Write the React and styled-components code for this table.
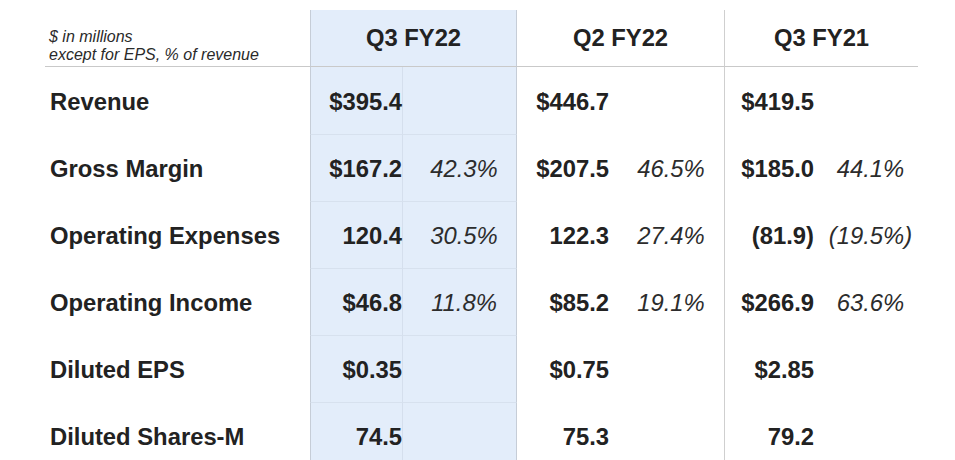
import React from 'react'
import styled, { createGlobalStyle } from 'styled-components'

const Global = createGlobalStyle`
  body {
    margin: 0;
    padding: 0;
    background: #ffffff;
    font-family: "Liberation Sans", Arial, sans-serif;
    color: #222222;
  }
`

const Page = styled.div`
  width: 955px;
  height: 460px;
  overflow: hidden;
  padding: 10px 0 0 45px;
  box-sizing: border-box;
`

const Table = styled.div`
  display: grid;
  grid-template-columns: 265px 93px 114px 92px 115px 90px 104px;
  grid-template-rows: 57px repeat(6, 67px);
  width: 873px;
`

const Note = styled.div`
  grid-column: 1;
  align-self: stretch;
  display: flex;
  flex-direction: column;
  justify-content: flex-end;
  padding: 0 0 2px 4px;
  border-bottom: 1px solid #c9c9c9;
  font-size: 16px;
  line-height: 18px;
  font-style: italic;
  color: #2a2a2a;
`

const Period = styled.div`
  grid-column: span 2;
  display: flex;
  align-items: center;
  justify-content: center;
  font-size: 23.8px;
  font-weight: 700;
  border-bottom: 1px solid #c9c9c9;
  box-sizing: border-box;
  background: ${({ hl }) => (hl ? '#e3edfa' : 'transparent')};
  border-left: ${({ hl, divider }) =>
    hl ? '1px solid #c6cdd7' : divider ? '1px solid #cfcfcf' : 'none'};
  border-right: ${({ hl }) => (hl ? '1px solid #c6cdd7' : 'none')};
`

const Label = styled.div`
  display: flex;
  align-items: center;
  padding: 2px 0 0 5px;
  font-size: 23.8px;
  font-weight: 700;
`

const Value = styled.div`
  display: flex;
  align-items: center;
  justify-content: flex-end;
  box-sizing: border-box;
  padding-top: 2px;
  font-size: 23.8px;
  font-weight: 700;
  background: ${({ hl }) => (hl ? '#e3edfa' : 'transparent')};
  border-left: ${({ hl, divider }) =>
    hl ? '1px solid #c6cdd7' : divider ? '1px solid #cfcfcf' : 'none'};
  border-right: ${({ hl }) => (hl ? '1px solid #d5dfed' : 'none')};
  border-top: ${({ hl, first }) => (hl && !first ? '1px solid #d7e1ee' : 'none')};
`

const Pct = styled.div`
  display: flex;
  align-items: center;
  justify-content: center;
  box-sizing: border-box;
  padding: 2px 0 0 9px;
  font-size: 23.8px;
  font-style: italic;
  color: #2c2c2c;
  background: ${({ hl }) => (hl ? '#e3edfa' : 'transparent')};
  border-right: ${({ hl }) => (hl ? '1px solid #c6cdd7' : 'none')};
  border-top: ${({ hl, first }) => (hl && !first ? '1px solid #d7e1ee' : 'none')};
`

const rows = [
  ['Revenue', ['$395.4', ''], ['$446.7', ''], ['$419.5', '']],
  ['Gross Margin', ['$167.2', '42.3%'], ['$207.5', '46.5%'], ['$185.0', '44.1%']],
  ['Operating Expenses', ['120.4', '30.5%'], ['122.3', '27.4%'], ['(81.9)', '(19.5%)']],
  ['Operating Income', ['$46.8', '11.8%'], ['$85.2', '19.1%'], ['$266.9', '63.6%']],
  ['Diluted EPS', ['$0.35', ''], ['$0.75', ''], ['$2.85', '']],
  ['Diluted Shares-M', ['74.5', ''], ['75.3', ''], ['79.2', '']],
]

export default function App() {
  return (
    <Page>
      <Global />
      <Table>
        <Note>
          <span>$ in millions</span>
          <span>except for EPS, % of revenue</span>
        </Note>
        <Period hl>Q3 FY22</Period>
        <Period>Q2 FY22</Period>
        <Period divider>Q3 FY21</Period>

        {rows.map(([label, a, b, c], i) => (
          <React.Fragment key={label}>
            <Label>{label}</Label>
            <Value hl first={i === 0}>{a[0]}</Value>
            <Pct hl first={i === 0}>{a[1]}</Pct>
            <Value>{b[0]}</Value>
            <Pct>{b[1]}</Pct>
            <Value divider>{c[0]}</Value>
            <Pct>{c[1]}</Pct>
          </React.Fragment>
        ))}
      </Table>
    </Page>
  )
}
